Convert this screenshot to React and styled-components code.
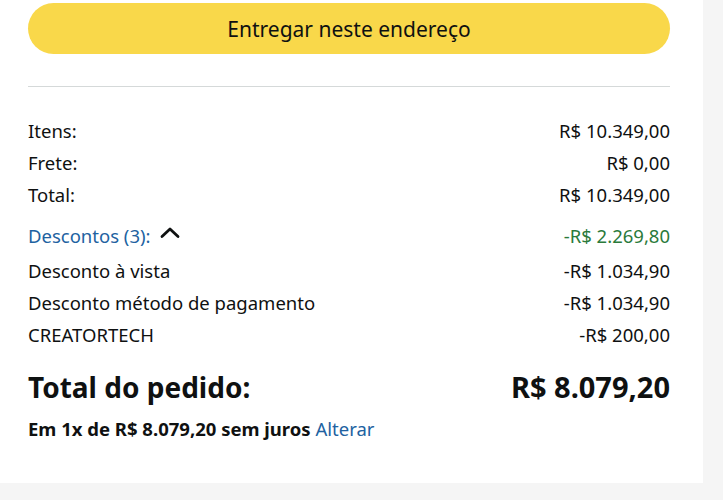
import styled, { createGlobalStyle } from "styled-components";

const GlobalStyle = createGlobalStyle`
    html, body {
        margin: 0;
        padding: 0;
        background: #f5f5f5;
    }
    body {
        font-family: "Noto Sans", "Liberation Sans", Arial, sans-serif;
        color: #0f1111;
    }
`;

const summary = [
    { label: "Itens:", value: "R$ 10.349,00" },
    { label: "Frete:", value: "R$ 0,00" },
    { label: "Total:", value: "R$ 10.349,00" },
];

const discounts = [
    { label: "Desconto à vista", value: "-R$ 1.034,90" },
    { label: "Desconto método de pagamento", value: "-R$ 1.034,90" },
    { label: "CREATORTECH", value: "-R$ 200,00" },
];

function ChevronUp() {
    return (
        <svg width="22" height="14" viewBox="0 0 22 14" aria-hidden="true">
            <path
                d="M3 11.5 L11 4 L19 11.5"
                fill="none"
                stroke="#0f1111"
                strokeWidth="2.8"
                strokeLinecap="round"
                strokeLinejoin="round"
            />
        </svg>
    );
}

export default function App() {
    return (
        <>
            <GlobalStyle />
            <Page>
                <Card>
                    <DeliverButton type="button">Entregar neste endereço</DeliverButton>
                    <Divider />
                    <Rows $top={28}>
                        {summary.map(({ label, value }) => (
                            <Row key={label}>
                                <span>{label}</span>
                                <span>{value}</span>
                            </Row>
                        ))}
                    </Rows>
                    <DiscountHeader>
                        <Toggle>
                            Descontos (3):
                            <ChevronUp />
                        </Toggle>
                        <Savings>-R$ 2.269,80</Savings>
                    </DiscountHeader>
                    <Rows>
                        {discounts.map(({ label, value }) => (
                            <Row key={label}>
                                <span>{label}</span>
                                <span>{value}</span>
                            </Row>
                        ))}
                    </Rows>
                    <GrandTotal>
                        <span>Total do pedido:</span>
                        <Amount>R$ 8.079,20</Amount>
                    </GrandTotal>
                    <Installments>
                        Em 1x de R$ 8.079,20 sem juros <a href="#">Alterar</a>
                    </Installments>
                </Card>
            </Page>
        </>
    );
}

const Page = styled.div`
    width: 723px;
    height: 500px;
    background: #f5f5f5;
    overflow: hidden;
`;

const Card = styled.div`
    width: 703px;
    height: 483px;
    box-sizing: border-box;
    background: #ffffff;
    padding: 3px 33px 0 28px;
    display: flex;
    flex-direction: column;
`;

const DeliverButton = styled.button`
    height: 51px;
    width: 100%;
    border: none;
    border-radius: 26px;
    background: #f9d84a;
    font-family: inherit;
    font-size: 21px;
    color: #0f1111;
    cursor: pointer;
`;

const Divider = styled.hr`
    margin: 32px 0 0;
    border: none;
    border-top: 1px solid #d5d9d9;
`;

const Rows = styled.div`
    display: flex;
    flex-direction: column;
    margin-top: ${(p) => p.$top || 0}px;
`;

const Row = styled.div`
    display: flex;
    justify-content: space-between;
    align-items: center;
    height: 32px;
    font-size: 18.5px;
    line-height: 32px;
`;

const DiscountHeader = styled.div`
    display: flex;
    justify-content: space-between;
    align-items: center;
    height: 40px;
    margin-top: 4px;
    font-size: 18.5px;
`;

const Toggle = styled.span`
    display: flex;
    align-items: center;
    gap: 8px;
    color: #2162a1;
    cursor: pointer;
    svg {
        margin-top: -6px;
    }
`;

const Savings = styled.span`
    color: #2b7a3b;
`;

const GrandTotal = styled.div`
    display: flex;
    justify-content: space-between;
    align-items: center;
    margin-top: 18px;
    font-size: 28px;
    font-weight: 700;
    line-height: 36px;
`;

const Amount = styled.span`
    font-size: 29px;
`;

const Installments = styled.p`
    margin: 12px 0 0;
    font-size: 18.5px;
    font-weight: 700;
    line-height: 24px;
    a {
        color: #2162a1;
        font-weight: 400;
        text-decoration: none;
    }
`;
